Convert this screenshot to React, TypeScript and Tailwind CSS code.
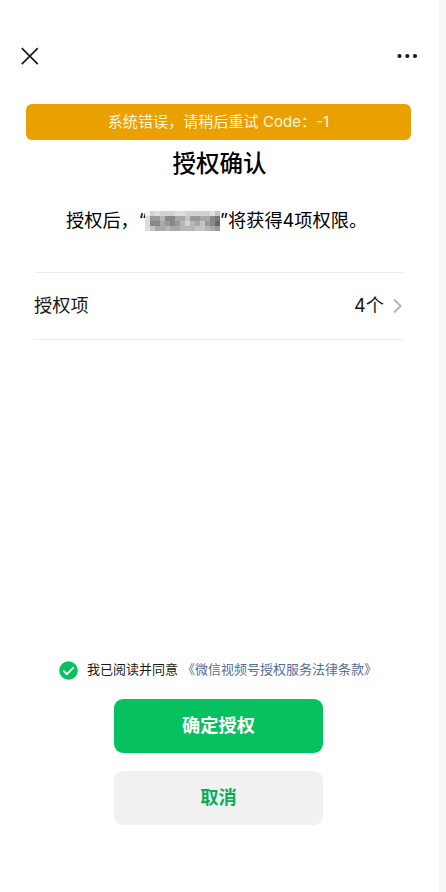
import React from "react";

// one row per string, one hex digit per cell
const mosaic = ["fdedddeedddddec", "e99b88aac99aa87", "e88a989bdbac986", "ecaabaabbbccba9"];

const shades: Record<string, string> = {
  "6": "#686868",
  "7": "#777777",
  "8": "#888888",
  "9": "#999999",
  a: "#a8a8a8",
  b: "#b6b6b6",
  c: "#c4c4c4",
  d: "#d2d2d2",
  e: "#dedede",
  f: "#f4f4f4",
};

function HiddenName() {
  return (
    <svg className="h-5 w-[75px] shrink-0" viewBox="0 0 75 20" shapeRendering="crispEdges">
      {mosaic.map((row, y) =>
        row.split("").map((c, x) => (
          <rect key={x + "-" + y} x={x * 5} y={y * 5} width={5} height={5} fill={shades[c]} />
        ))
      )}
    </svg>
  );
}

function Header() {
  return (
    <div className="flex h-[104px] items-start justify-between pt-[47px] pr-[21px] pl-[21px]">
      <svg className="h-[18px] w-[18px]" viewBox="0 0 18 18" fill="none" stroke="#191919" strokeWidth="1.7">
        <path d="M0.8 1.2L16.8 17.2M16.8 1.2L0.8 17.2" />
      </svg>
      <svg className="h-[18px] w-[22px]" viewBox="0 0 22 18" fill="#191919">
        <circle cx="3.5" cy="9" r="2.1" />
        <circle cx="11.3" cy="9" r="2.1" />
        <circle cx="19" cy="9" r="2.1" />
      </svg>
    </div>
  );
}

export default function App() {
  return (
    <div className="h-[892px] w-[446px] overflow-hidden bg-[#f7f7f7] font-['Inter','Noto_Sans_CJK_SC',sans-serif] text-[#191919]">
      <div className="flex h-full w-[439px] flex-col bg-white">
        <Header />
        <div className="mr-7 ml-[26px] flex h-9 items-center justify-center rounded-md bg-[#eaa000] text-[15.1px] whitespace-pre text-[#fdf6df]">
          系统错误，请稍后重试 Code：-1
        </div>
        <h1 className="mt-2 text-center text-[23.5px] leading-8 font-medium text-black">授权确认</h1>
        <div className="mt-[21px] ml-[66px] flex h-10 items-center text-[18.2px] whitespace-nowrap text-black">
          <span className="w-[79px] overflow-hidden">授权后，“</span>
          <HiddenName />
          <span>”将获得4项权限。</span>
        </div>
        <div className="mt-[31px] mr-[35px] ml-[34px] flex h-[68px] items-center justify-between border-y border-[#ededed] text-[18.2px]">
          <span>授权项</span>
          <div className="flex items-center">
            <span>4个</span>
            <svg className="ml-2 h-4 w-3" viewBox="0 0 12 16" fill="none" stroke="#b2b2b2" strokeWidth="1.8">
              <path d="M2 1.5L8.7 8L2 14.5" />
            </svg>
          </div>
        </div>
        <div className="mt-auto ml-[59px] flex h-5 items-center text-[13px] whitespace-nowrap">
          <svg className="mr-[9px] h-[19px] w-[19px]" viewBox="0 0 19 19" fill="none">
            <circle cx="9.5" cy="9.5" r="9.3" fill="#07c160" />
            <path d="M4.3 9.7L7.8 13.2L14.6 6.3" stroke="#fff" strokeWidth="1.8" />
          </svg>
          <span>我已阅读并同意</span>
          <a className="ml-1 text-[#576b95]">《微信视频号授权服务法律条款》</a>
        </div>
        <div className="mt-[19px] mb-[67px] ml-[114px] flex w-[209px] flex-col gap-[18px] text-[18.2px] font-bold">
          <button className="h-[54px] rounded-[9px] bg-[#07c160] text-white">确定授权</button>
          <button className="h-[54px] rounded-[9px] bg-[#f1f1f1] text-[#06ae56]">取消</button>
        </div>
      </div>
    </div>
  );
}
